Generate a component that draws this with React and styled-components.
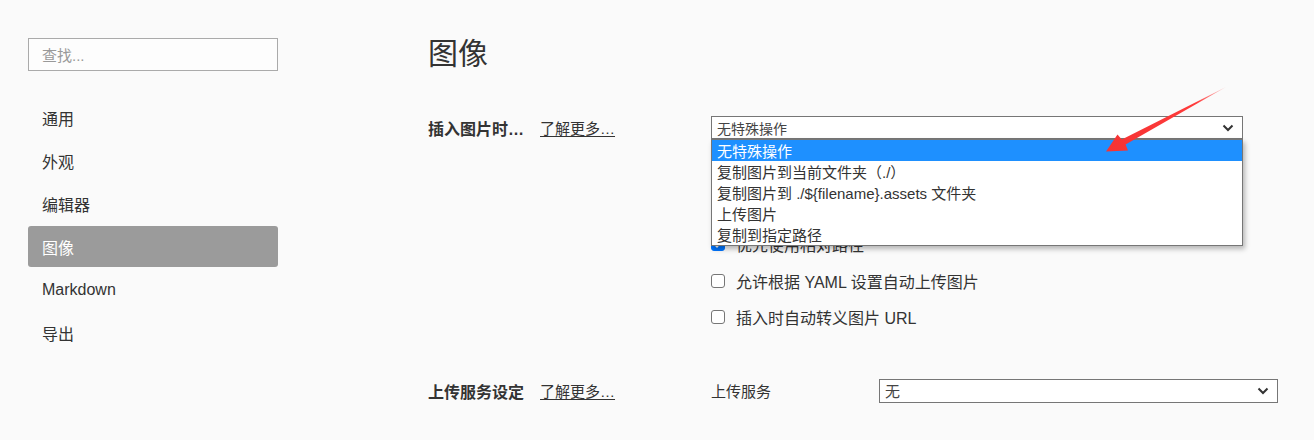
import React from 'react'
import styled, { createGlobalStyle } from 'styled-components'

const GlobalStyle = createGlobalStyle`
  html, body {
    margin: 0;
    padding: 0;
    background: #fafafa;
  }
  body {
    font-family: "Liberation Sans", "Noto Sans CJK SC", sans-serif;
    color: #333;
  }
`

const Page = styled.div`
  position: relative;
  display: flex;
  width: 1314px;
  height: 440px;
  overflow: hidden;
  background: #fafafa;
`

const Sidebar = styled.aside`
  width: 250px;
  padding: 38px 0 0 28px;
  display: flex;
  flex-direction: column;
`

const Search = styled.div`
  box-sizing: border-box;
  width: 250px;
  height: 33px;
  border: 1px solid #aaa;
  background: #fdfdfd;
  padding-left: 13px;
  display: flex;
  align-items: center;
  font-size: 15px;
  color: #999;
`

const Nav = styled.nav`
  margin-top: 26px;
  display: flex;
  flex-direction: column;
  gap: 2px;
`

const NavItem = styled.div`
  height: 41px;
  display: flex;
  align-items: center;
  padding-left: 14px;
  border-radius: 3px;
  font-size: 16px;
  color: ${p => (p.$active ? '#fff' : '#333')};
  background: ${p => (p.$active ? '#9b9b9b' : 'transparent')};
`

const Main = styled.main`
  margin-left: 150px;
  padding-top: 39px;
  display: flex;
  flex-direction: column;
`

const Title = styled.h1`
  margin: 0;
  font-size: 30px;
  line-height: 30px;
  font-weight: normal;
  color: #333;
`

const Section = styled.section`
  display: grid;
  grid-template-columns: 283px auto;
  margin-top: ${p => p.$top}px;
`

const LabelCell = styled.div`
  display: flex;
  align-items: center;
  height: ${p => p.$h}px;
`

const Label = styled.span`
  font-size: 16px;
  font-weight: bold;
  color: #333;
`

const LearnMore = styled.span`
  margin-left: 16px;
  font-size: 15px;
  color: #333;
  text-decoration: underline;
  text-underline-offset: 2px;
`

const Controls = styled.div`
  display: flex;
  flex-direction: column;
`

const SelectWrap = styled.div`
  position: relative;
  width: ${p => p.$w}px;
`

const SelectBox = styled.div`
  box-sizing: border-box;
  width: ${p => p.$w}px;
  height: ${p => p.$h}px;
  border: 1px solid #767676;
  background: #fff;
  display: flex;
  align-items: center;
  justify-content: space-between;
  padding: 0 8px 0 5px;
  font-size: ${p => p.$fs}px;
  color: #444;
`

const Dropdown = styled.ul`
  position: absolute;
  top: 23px;
  left: 0;
  z-index: 5;
  box-sizing: border-box;
  width: 532px;
  margin: 0;
  padding: 0;
  list-style: none;
  background: #fff;
  border: 1px solid #767676;
  box-shadow: 2px 3px 5px rgba(0, 0, 0, 0.28);
`

const Option = styled.li`
  height: 21px;
  display: flex;
  align-items: center;
  padding-left: 5px;
  font-size: 15px;
  color: ${p => (p.$hl ? '#fff' : '#333')};
  background: ${p => (p.$hl ? '#1e90ff' : 'transparent')};
`

const CheckList = styled.div`
  margin-top: 23px;
  display: flex;
  flex-direction: column;
  gap: 16.2px;
`

const CheckRow = styled.label`
  height: 20px;
  display: flex;
  align-items: center;
  font-size: 16px;
  color: #333;
`

const Box = styled.span`
  box-sizing: border-box;
  width: 14px;
  height: 14px;
  margin-right: 11px;
  border-radius: 3px;
  border: 1px solid ${p => (p.$on ? '#0075ff' : '#767676')};
  background: ${p => (p.$on ? '#0075ff' : '#fff')};
  display: flex;
  align-items: center;
  justify-content: center;
`

const ServiceRow = styled.div`
  display: flex;
  align-items: center;
  height: 24px;
`

const ServiceLabel = styled.span`
  width: 168px;
  font-size: 15px;
  color: #333;
`

const Overlay = styled.svg`
  position: absolute;
  left: 0;
  top: 0;
  pointer-events: none;
  z-index: 10;
`

const Chevron = () => (
  <svg width="12" height="8" viewBox="0 0 12 8">
    <path d="M1.5 1.5 L6 6 L10.5 1.5" fill="none" stroke="#333" strokeWidth="2" />
  </svg>
)

const Checkbox = ({ on, children }) => (
  <CheckRow>
    <Box $on={on}>
      {on && (
        <svg width="10" height="10" viewBox="0 0 10 10">
          <path d="M1.5 5.2 L4 7.6 L8.6 2.4" fill="none" stroke="#fff" strokeWidth="1.8" />
        </svg>
      )}
    </Box>
    {children}
  </CheckRow>
)

const navItems = ['通用', '外观', '编辑器', '图像', 'Markdown', '导出']
const options = [
  '无特殊操作',
  '复制图片到当前文件夹（./）',
  '复制图片到 ./${filename}.assets 文件夹',
  '上传图片',
  '复制到指定路径',
]

export default function App() {
  return (
    <Page>
      <GlobalStyle />
      <Sidebar>
        <Search>查找...</Search>
        <Nav>
          {navItems.map(n => (
            <NavItem key={n} $active={n === '图像'}>{n}</NavItem>
          ))}
        </Nav>
      </Sidebar>

      <Main>
        <Title>图像</Title>

        <Section $top={47}>
          <LabelCell $h={23}>
            <Label>插入图片时…</Label>
            <LearnMore>了解更多…</LearnMore>
          </LabelCell>
          <Controls>
            <SelectWrap $w={532}>
              <SelectBox $w={532} $h={23} $fs={14}>
                <span>无特殊操作</span>
                <Chevron />
              </SelectBox>
              <Dropdown>
                {options.map((o, i) => (
                  <Option key={o} $hl={i === 0}>{o}</Option>
                ))}
              </Dropdown>
            </SelectWrap>
            <CheckList>
              <Checkbox on>对本地位置的图片应用上述规则</Checkbox>
              <Checkbox on>对网络位置的图片应用上述规则</Checkbox>
              <Checkbox on>优先使用相对路径</Checkbox>
              <Checkbox>允许根据 YAML 设置自动上传图片</Checkbox>
              <Checkbox>插入时自动转义图片 URL</Checkbox>
            </CheckList>
          </Controls>
        </Section>

        <Section $top={52}>
          <LabelCell $h={24}>
            <Label>上传服务设定</Label>
            <LearnMore>了解更多…</LearnMore>
          </LabelCell>
          <ServiceRow>
            <ServiceLabel>上传服务</ServiceLabel>
            <SelectBox $w={399} $h={24} $fs={15}>
              <span>无</span>
              <Chevron />
            </SelectBox>
          </ServiceRow>
        </Section>
      </Main>

      <Overlay width="1314" height="440" viewBox="0 0 1314 440">
        <defs>
          <linearGradient id="arrowFade" x1="1226" y1="87" x2="1106" y2="151" gradientUnits="userSpaceOnUse">
            <stop offset="0" stopColor="#ff3b3b" stopOpacity="0.25" />
            <stop offset="0.25" stopColor="#ff3b3b" stopOpacity="1" />
            <stop offset="1" stopColor="#f53333" stopOpacity="1" />
          </linearGradient>
        </defs>
        <polygon
          points="1226,87 1125.6,144.6 1128,150.5 1106,151.5 1117.5,134.5 1121.8,139.4"
          fill="url(#arrowFade)"
        />
      </Overlay>
    </Page>
  )
}
